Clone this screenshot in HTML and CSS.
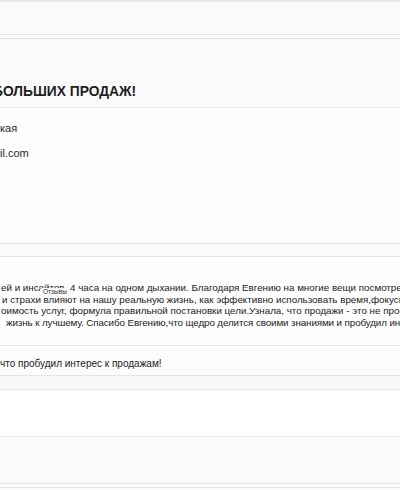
FILE: index.html
```html
<!DOCTYPE html>
<html lang="ru">
<head>
<meta charset="utf-8">
<title>Отзывы</title>
<link rel="stylesheet" href="styles.css">
</head>
<body>
<div class="page">
  <div class="band topbar"></div>
  <div class="gap"></div>
  <div class="band title-band">
    <h1 class="title">БОЛЬШИХ ПРОДАЖ!</h1>
  </div>
  <div class="panel profile">
    <div class="field">кая</div>
    <div class="field">il.com</div>
  </div>
  <div class="band strip"></div>
  <div class="panel review">
    <div class="line l1">ей и инсайтов. 4 часа на одном дыхании. Благодаря Евгению на многие вещи посмотрела иначе</div>
    <div class="line l2">и страхи влияют на нашу реальную жизнь, как эффективно использовать время,фокусироваться</div>
    <div class="line l3">оимость услуг, формула правильной постановки цели.Узнала, что продажи - это не просто</div>
    <div class="line l4">жизнь к лучшему. Спасибо Евгению,что щедро делится своими знаниями и пробудил интерес</div>
    <span class="tooltip">Отзывы</span>
  </div>
  <div class="panel summary">
    <div class="line">что пробудил интерес к продажам!</div>
  </div>
  <div class="band strip2"></div>
  <div class="panel blank"></div>
  <div class="band footer"></div>
  <div class="gap2"></div>
  <div class="band end"></div>
</div>
</body>
</html>
```
FILE: styles.css
```css
* { box-sizing: border-box; margin: 0; padding: 0; }
html, body { width: 400px; height: 490px; overflow: hidden; }
body {
  background: #ffffff;
  font-family: "Liberation Sans", Arial, Helvetica, sans-serif;
  color: #2b2b2b;
}
.page { display: flex; flex-direction: column; }
.band { background: #fafafa; }
.topbar { height: 35px; border-top: 1px solid #e4e4e4; border-bottom: 1px solid #e6e6e6; box-shadow: inset 0 1px 1px #ececec; }
.gap { height: 3px; background: #fdfdfd; }
.title-band { height: 70px; border-top: 1px solid #e2e2e2; border-bottom: 1px solid #ececec; display: flex; align-items: flex-end; padding-bottom: 8px; }
.title { font-size: 13.8px; font-weight: bold; color: #1f1f1f; margin-left: -7px; white-space: nowrap; }
.panel { background: #fdfdfd; position: relative; overflow: hidden; }
.profile { height: 136px; border-bottom: 1px solid #e6e6e6; padding-top: 14px; display: flex; flex-direction: column; gap: 12px; }
.field { font-size: 11px; line-height: 13px; white-space: nowrap; color: #2a2a2a; }
.strip { height: 13px; border-bottom: 1px solid #e6e6e6; }
.review { height: 89px; background: #fefefe; border-bottom: 1px solid #e6e6e6; padding-top: 25px; }
.line { font-size: 9.8px; line-height: 11.5px; white-space: nowrap; color: #222; }
.l1 { padding-left: 1px; }
.l2 { padding-left: 2px; }
.l3 { padding-left: 1px; }
.l4 { padding-left: 6px; letter-spacing: -0.1px; }
.tooltip {
  position: absolute; left: 40px; top: 31px;
  font-size: 6.5px; line-height: 8px; padding: 0 3px;
  background: rgba(250,250,250,0.95); color: #333;
  border-radius: 2px; box-shadow: 0 0 2px rgba(0,0,0,0.15);
}
.summary { height: 30px; background: #fcfcfc; border-bottom: 1px solid #e6e6e6; padding-top: 12px; }
.summary .line { font-size: 10px; }
.strip2 { height: 14px; background: #f8f8f8; border-bottom: 1px solid #e6e6e6; }
.blank { height: 47px; background: #ffffff; border-bottom: 1px solid #e6e6e6; }
.footer { height: 47px; background: #fafafa; border-bottom: 1px solid #e4e4e4; }
.gap2 { height: 3px; background: #fdfdfd; }
.end { height: 5px; border-top: 1px solid #e8e8e8; background: #fbfbfb; }
```
